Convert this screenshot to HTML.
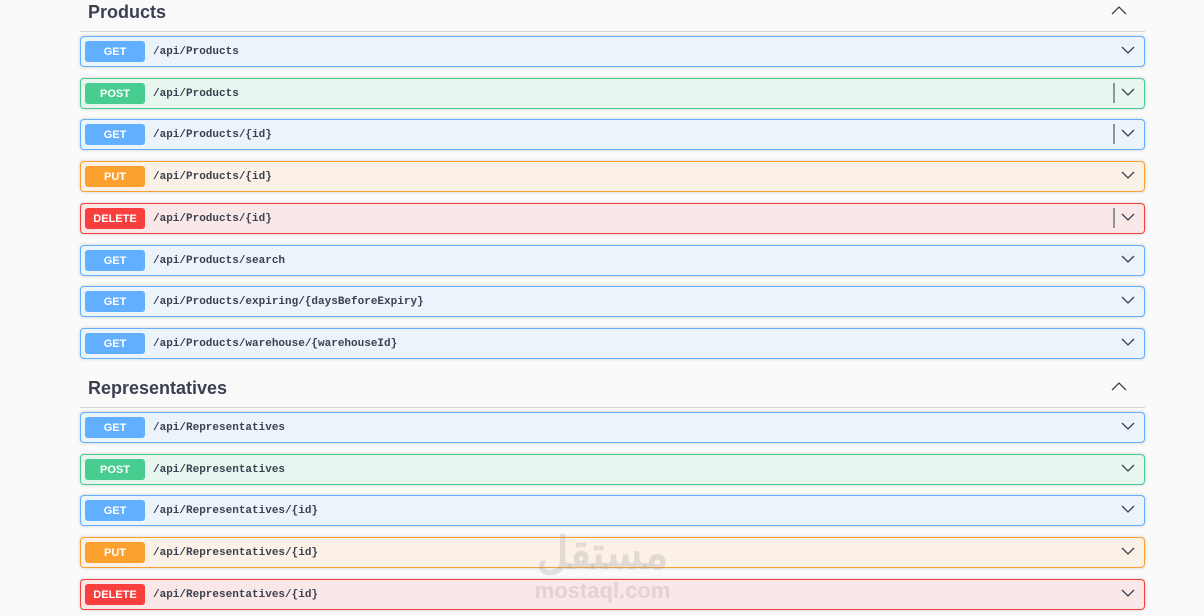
<!DOCTYPE html><html><head><style>
body{margin:0;background:#fafafa;font-family:"Liberation Sans",sans-serif;width:1204px;height:616px;overflow:hidden;position:relative}
.h{position:absolute;left:80px;width:1065px;border-bottom:1px solid #d4d4d4;height:30px}
.h span{position:absolute;left:8px;top:1px;font-size:18px;font-weight:bold;color:#3b4151}
.h svg{position:absolute;right:18px;top:4px}
.r{position:absolute;left:80px;width:1063px;height:29px;border:1px solid;border-radius:4px;box-shadow:0 0 3px rgba(0,0,0,.19)}
.b{position:absolute;left:4px;top:4px;width:60px;height:21px;border-radius:3px;color:#fff;font-size:11px;font-weight:bold;text-align:center;line-height:22px}
.p{position:absolute;left:72px;top:1px;line-height:29px;font-family:"Liberation Mono",monospace;font-size:11px;font-weight:bold;color:#3b4151}
.c{position:absolute;right:9px;top:9px}
.g{background:#ebf3fb;border-color:#61affe}.g .b{background:#61affe}
.po{background:#e8f6f0;border-color:#49cc90}.po .b{background:#49cc90}
.pu{background:#fbf1e6;border-color:#fca130}.pu .b{background:#fca130}
.d{background:#fae7e7;border-color:#f93e3e}.d .b{background:#f93e3e}
.bar{position:absolute;right:29px;top:4px;width:2px;height:20px;background:#8a9a92}
</style></head><body>
<div class="h" style="top:1px"><span>Products</span><svg width="16" height="10"><path d="M1 9L8 2L15 9" stroke="#3b4151" stroke-width="1.3" fill="none"/></svg></div>
<div class="h" style="top:377px"><span>Representatives</span><svg width="16" height="10"><path d="M1 9L8 2L15 9" stroke="#3b4151" stroke-width="1.3" fill="none"/></svg></div>
<div class="r g" style="top:36px"><div class="b">GET</div><div class="p">/api/Products</div></div>
<div class="r po" style="top:78px"><div class="b">POST</div><div class="p">/api/Products</div><div class="bar"></div></div>
<div class="r g" style="top:119px"><div class="b">GET</div><div class="p">/api/Products/{id}</div><div class="bar"></div></div>
<div class="r pu" style="top:161px"><div class="b">PUT</div><div class="p">/api/Products/{id}</div></div>
<div class="r d" style="top:203px"><div class="b">DELETE</div><div class="p">/api/Products/{id}</div><div class="bar"></div></div>
<div class="r g" style="top:245px"><div class="b">GET</div><div class="p">/api/Products/search</div></div>
<div class="r g" style="top:286px"><div class="b">GET</div><div class="p">/api/Products/expiring/{daysBeforeExpiry}</div></div>
<div class="r g" style="top:328px"><div class="b">GET</div><div class="p">/api/Products/warehouse/{warehouseId}</div></div>
<div class="r g" style="top:412px"><div class="b">GET</div><div class="p">/api/Representatives</div></div>
<div class="r po" style="top:454px"><div class="b">POST</div><div class="p">/api/Representatives</div></div>
<div class="r g" style="top:495px"><div class="b">GET</div><div class="p">/api/Representatives/{id}</div></div>
<div class="r pu" style="top:537px"><div class="b">PUT</div><div class="p">/api/Representatives/{id}</div></div>
<div class="r d" style="top:579px"><div class="b">DELETE</div><div class="p">/api/Representatives/{id}</div></div>
<div style="position:absolute;left:515px;top:530px;width:175px;text-align:center;color:rgba(150,150,150,.25);font-weight:bold;font-family:'Liberation Sans','Noto Sans CJK SC',sans-serif"><div style="font-size:44px;line-height:48px">مستقل</div><div style="font-size:22px">mostaql.com</div></div>
<script>
document.querySelectorAll('.r').forEach(r=>{r.insertAdjacentHTML('beforeend','<svg class="c" width="14" height="9"><path d="M1 1L7 7L13 1" stroke="#3b4151" stroke-width="1.3" fill="none"/></svg>')});
</script>
</body></html>
